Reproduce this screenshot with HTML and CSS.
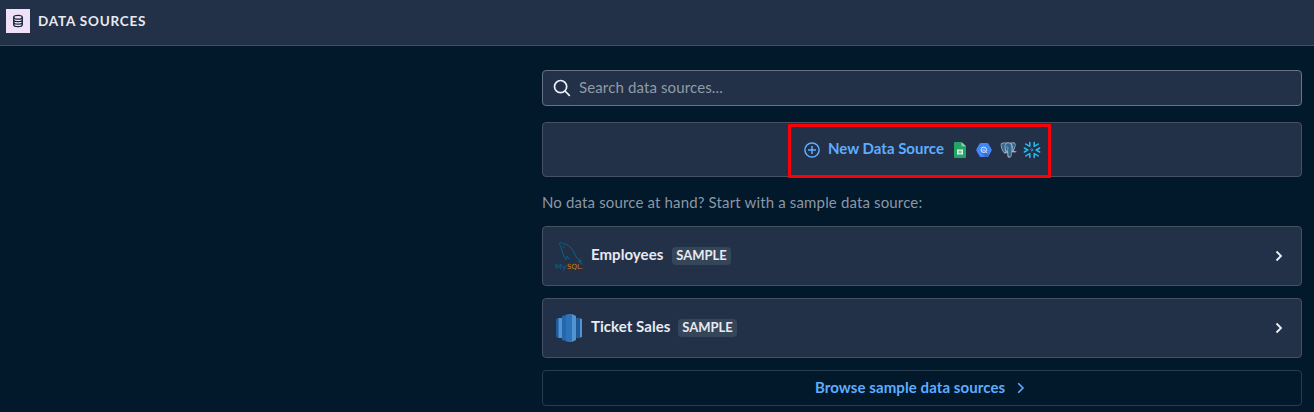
FILE: index.html
```html
<!DOCTYPE html>
<html lang="en">
<head>
<meta charset="utf-8">
<title>Data Sources</title>
<link rel="stylesheet" href="styles.css">
</head>
<body>
<header class="topbar">
  <span class="topbar-icon">
    <svg width="12" height="14" viewBox="0 0 12 14" fill="none" stroke="#17273b" stroke-width="1.3"><ellipse cx="6" cy="3.3" rx="4.3" ry="1.9"/><path d="M1.7 3.3v7.4c0 2.5 8.6 2.5 8.6 0V3.3M1.7 5.8c0 2.5 8.6 2.5 8.6 0M1.7 8.3c0 2.5 8.6 2.5 8.6 0"/></svg>
  </span>
  <h1 class="topbar-title">DATA SOURCES</h1>
</header>
<main class="content">
  <div class="search">
    <svg width="18" height="18" viewBox="0 0 18 18" fill="none" stroke="#f2f1f8" stroke-width="1.7"><circle cx="7.6" cy="7.6" r="6.1"/><path d="M12 12l4.8 4.8"/></svg>
    <span class="search-text">Search data sources...</span>
  </div>
  <div class="new-source">
    <svg class="plus" width="16" height="16" viewBox="0 0 16 16" fill="none" stroke="#5eadff" stroke-width="1.5"><circle cx="8" cy="8" r="7.1"/><path d="M8 4v8M4 8h8"/></svg>
    <span class="new-label">New Data Source</span>
    <span class="brands">
      <svg width="16" height="16" viewBox="0 0 16 16"><path d="M3 0h6l5 4v11q0 1-1 1H3q-1 0-1-1V1q0-1 1-1z" fill="#23a566"/><path d="M9.5 0L14 4.3H9.5z" fill="#8ed1b1"/><path d="M5 7.5h6v5H5z" fill="#e3f4ea"/><path d="M5.800 10h4.400M8 8.300v3.400" stroke="#23a566" stroke-width=".7"/></svg>
      <svg width="16" height="16" viewBox="0 0 16 16"><path d="M4.600 1h6.800q.6 0 .9.500l3.300 5.800q.4.700 0 1.400l-3.300 5.800q-.3.500-.9.500H4.600q-.6 0-.9-.5L.4 8.700q-.4-.7 0-1.400l3.300-5.800q.3-.5.9-.5z" fill="#4386f5"/><path d="M10.500 10.500l2.800 2.300-1.300 2.200H9l-3-4z" fill="#376fd1"/><circle cx="7.800" cy="7.800" r="2.700" fill="none" stroke="#dce8ff"/><path d="M9.700 9.700l1.500 1.500M6.800 7.700v1M7.900 6.700v2.500M8.900 7.900v.7" stroke="#dce8ff" stroke-width=".8"/></svg>
      <svg width="18" height="16" viewBox="0 0 18 16"><path d="M1.200 1.300C3 0 5 .4 6 .8c2-.7 3.600-.5 4.500 0 1.500-.7 4-.8 4.900.7.800 1.800-.5 5-1.700 7.300l3 .6c-.8 1-2.500 1.200-3.700.9l-1.200.2c-.1 1.800.2 4.500-1.600 5-2.200.7-2.800-.5-2.900-2.500l-.2-2.300-1.400.8C3.500 12 1.300 7 .8 4.200c-.2-1.100-.2-2.200.4-2.900z" fill="#a3afbb"/><path d="M1.700 2C3 1 4.700 1.200 5.500 1.500 4.300 3 4.500 6 4.900 8.200l.8 1.500c-1.200 1.900-3-.9-4-5C1.500 3.700 1.200 2.600 1.700 2zM6 1.800C8 .8 9.700 1.200 10.500 2.200c1 1.300 1.500 4 .9 6.500-.3 2 .2 5.300-1.200 5.900-1.200.4-1.900-.2-1.900-2l-.1-3.200-2-.8C5.300 6.500 5 3.700 6 1.800zM11.300 1.500c1.400-.5 3.200-.4 3.700.5.500 1.500-.9 4.700-2.500 6.600.5-3.100.3-5.500-1.200-7.100z" fill="#336791"/><path d="M5.800 5.200c1-.7 2-.3 2.200.5L7.500 9M11 5.400l1.400-.5" fill="none" stroke="#a3afbb" stroke-width=".7"/></svg>
      <svg class="snow" width="18" height="18" viewBox="-9 -9 18 18" fill="none" stroke="#29b5e8" stroke-width="1.600" stroke-linecap="round" stroke-linejoin="round"><path d="M0-1.200L1.200 0 0 1.200-1.200 0z" stroke-width=".9"/><path d="M-7.600-2L-4.200 0l-3.400 2M7.600-2L4.200 0l3.400 2M2.200-7.500v3.900l4-2.300M-2.200-7.500v3.900l-4-2.300M2.200 7.500V3.600l4 2.300M-2.200 7.500V3.600l-4 2.300"/></svg>
    </span>
    <span class="highlight"></span>
  </div>
  <p class="hint">No data source at hand? Start with a sample data source:</p>
  <div class="card">
    <svg class="logo" width="30" height="30" viewBox="0 0 30 30"><g fill="none" stroke="#08668b" stroke-width="1" stroke-linecap="round" stroke-linejoin="round"><path d="M11 18.200C8.800 17 8.800 14 8 12.800 7 10 6.500 8.500 5.800 5.500 4.600 4 4.200 2.500 5 1.900c1-.6 2.500.2 3.500 1 5 .2 8.500 4.500 11 9.600 1.200 3 1.900 4.400 4.300 5.800l2.700 1.900-3.200-.1c.8 1.300 2.200 1.500 3.900 2.900"/><path d="M11 18.200c.3-1.500.5-2.200 1-3.100l2 2.900M8.300 5.500l.7.900"/></g><g class="mysql"><text x="0" y="27.500" fill="#08668b" textLength="12" lengthAdjust="spacingAndGlyphs">My</text><text x="12" y="27.500" fill="#d58205" textLength="16" lengthAdjust="spacingAndGlyphs">SQL.</text></g></svg>
    <span class="name employees">Employees</span><span class="tag">SAMPLE</span>
    <svg class="chev" width="8" height="12" viewBox="0 0 8 12" fill="none" stroke="#f2f1f8" stroke-width="1.800"><path d="M1.500 1.500L6 6l-4.500 4.500"/></svg>
  </div>
  <div class="card">
    <svg class="logo" width="30" height="30" viewBox="0 0 30 30"><path d="M1 6l3-1v20l-3-1z" fill="#205b99"/><path d="M3.500 5H8v20H3.500z" fill="#5294cf"/><path d="M27 6l-3-1v20l3-1z" fill="#5294cf"/><path d="M21 5h4v20h-4z" fill="#205b99"/><path d="M7 3l7-2v28L7 27z" fill="#2467ae"/><path d="M11 1.900l3-.9h3v28h-3l-3-.9z" fill="#2e73b8"/><path d="M17 1l4 2v24l-4 2z" fill="#5294cf"/></svg>
    <span class="name ticket">Ticket Sales</span><span class="tag">SAMPLE</span>
    <svg class="chev" width="8" height="12" viewBox="0 0 8 12" fill="none" stroke="#f2f1f8" stroke-width="1.800"><path d="M1.500 1.500L6 6l-4.500 4.500"/></svg>
  </div>
  <div class="browse">
    <span class="browse-label">Browse sample data sources</span>
    <svg width="8" height="12" viewBox="0 0 8 12" fill="none" stroke="#5eadff" stroke-width="1.600"><path d="M1.200 1.200L6 6l-4.800 4.800"/></svg>
  </div>
</main>
</body>
</html>
```
FILE: styles.css
```css
* { box-sizing: border-box; }
body { margin: 0; height: 412px; overflow: hidden; background: #02182b; color: #e9e9f2; font: 500 15px/20px Lato, "Open Sans", sans-serif; white-space: nowrap; }
svg { display: block; flex: none; }
.topbar { display: flex; align-items: center; height: 46px; padding: 0 6px 4px; background: #223147; border-bottom: 1px solid #415064; }
.topbar-icon { display: grid; place-items: center; width: 24px; height: 24px; background: #efe1f8; }
.topbar-title { margin: 0 0 0 8px; font-size: 13.500px; font-weight: 700; letter-spacing: .8px; }
.content { width: 760px; margin: 24px 12px 0 auto; }
.search, .new-source, .card, .browse { display: flex; align-items: center; border: 1px solid #455264; border-radius: 4px; background: #223147; }
.search { height: 36px; padding-left: 10px; border-color: #667384; }
.search-text { margin-left: 8px; padding-bottom: 2px; color: #929ba6; font-weight: 400; letter-spacing: .13px; }
.new-source { position: relative; height: 55px; margin-top: 16px; padding-left: 261px; }
.new-label { margin-left: 8px; padding-bottom: 3px; width: 116px; color: #5eadff; font-weight: 700; }
.brands { display: flex; align-items: center; gap: 8px; margin-left: 8px; }
.snow { margin-left: -3px; }
.highlight { position: absolute; left: 245px; top: 1px; width: 263px; height: 54px; border: 3px solid #fb0008; }
.hint { margin: 15px 0 14px; color: #8c97a3; font-weight: 400; letter-spacing: .15px; }
.card { height: 60px; margin-bottom: 12px; padding: 0 22px 0 12px; }
.name { margin-left: 6px; padding-bottom: 4px; font-weight: 700; letter-spacing: .05px; }
.tag { display: flex; align-items: center; justify-content: center; width: 59px; height: 18px; margin-left: 8px; padding-bottom: 2px; border-radius: 4px; background: #364659; font-size: 13px; font-weight: 700; line-height: 18px; }
.employees { width: 73px; }
.ticket { width: 79px; }
.chev { margin: 0 -4px 0 auto; }
.mysql { font: 7px "DejaVu Sans", sans-serif; }
.browse { height: 36px; padding-left: 272px; background: transparent; border-color: #293c4d; }
.browse-label { width: 190px; margin-right: 12px; padding-bottom: 2px; color: #5eadff; font-weight: 700; letter-spacing: .08px; }
```
